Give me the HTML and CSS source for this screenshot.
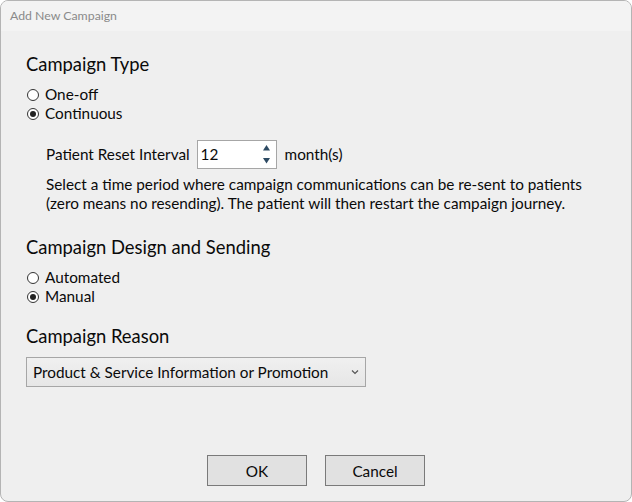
FILE: index.html
```html
<!DOCTYPE html>
<html>
<head>
<meta charset="utf-8">
<link rel="stylesheet" href="styles.css">
</head>
<body>
<div class="window">
  <div class="titlebar">Add New Campaign</div>
  <div class="content">
    <h2 class="heading first">Campaign Type</h2>
    <div class="radios">
      <label class="radio"><span class="dot"></span>One-off</label>
      <label class="radio"><span class="dot on"></span>Continuous</label>
    </div>
    <div class="sub">
      <div class="interval">
        <span>Patient Reset Interval</span>
        <div class="spin">
          <span class="spin-val">12</span>
          <span class="arrows">
            <svg width="9" height="22" viewBox="0 0 9 22"><path d="M4.5 2 L8 7.5 L1 7.5 Z" fill="#2d4a63"/><path d="M1 15 L8 15 L4.5 20.5 Z" fill="#2d4a63"/></svg>
          </span>
        </div>
        <span>month(s)</span>
      </div>
      <p class="desc">Select a time period where campaign communications can be re-sent to patients (zero means no resending). The patient will then restart the campaign journey.</p>
    </div>
    <h2 class="heading">Campaign Design and Sending</h2>
    <div class="radios">
      <label class="radio"><span class="dot"></span>Automated</label>
      <label class="radio"><span class="dot on"></span>Manual</label>
    </div>
    <h2 class="heading">Campaign Reason</h2>
    <div class="select">
      <span>Product &amp; Service Information or Promotion</span>
      <svg width="8" height="6" viewBox="0 0 8 6"><path d="M1 1.5 L4 4.5 L7 1.5" fill="none" stroke="#555" stroke-width="1.2"/></svg>
    </div>
    <div class="buttons">
      <button class="btn">OK</button>
      <button class="btn">Cancel</button>
    </div>
  </div>
</div>
</body>
</html>
```
FILE: styles.css
```css
html, body {
  margin: 0;
  padding: 0;
  background: #ffffff;
}
body {
  font-family: Lato, "Noto Sans", sans-serif;
  color: #0a0a0a;
}
.window {
  width: 632px;
  height: 502px;
  box-sizing: border-box;
  border: 1px solid #b4b4b4;
  border-radius: 8px;
  background: #efefef;
  overflow: hidden;
  display: flex;
  flex-direction: column;
}
.titlebar {
  height: 30px;
  background: #f3f3f3;
  color: #8a8a8a;
  font-size: 12.3px;
  line-height: 30px;
  padding-left: 9px;
  flex: none;
}
.content {
  flex: 1;
  padding: 19px 25px 0 25px;
  display: flex;
  flex-direction: column;
  font-size: 15.3px;
}
.heading {
  font-weight: normal;
  font-size: 18.4px;
  margin: 0;
  line-height: 28px;
  color: #0a0a0a;
}
.radios {
  display: flex;
  flex-direction: column;
  margin-top: 7px;
}
.radio {
  display: flex;
  align-items: center;
  height: 19px;
  line-height: 19px;
}
.dot {
  width: 10px;
  height: 10px;
  border: 1px solid #333;
  border-radius: 50%;
  background: #fff;
  margin: 0 6px 0 1px;
  position: relative;
  box-sizing: content-box;
}
.dot.on::after {
  content: "";
  position: absolute;
  left: 2px;
  top: 2px;
  width: 6px;
  height: 6px;
  border-radius: 50%;
  background: #222;
}
.sub {
  padding-left: 20px;
  margin-top: 16px;
}
.interval {
  display: flex;
  align-items: center;
  gap: 7px;
  height: 30px;
}
.spin {
  width: 80px;
  height: 29px;
  box-sizing: border-box;
  border: 1px solid #a6a6a6;
  background: #fff;
  display: flex;
  align-items: center;
  justify-content: space-between;
  padding: 0 5px 0 3px;
  margin-right: 1px;
}
.arrows {
  display: flex;
  align-items: center;
}
.desc {
  margin: 6px 0 0 0;
  line-height: 19px;
  width: 570px;
}
.sub + .heading {
  margin-top: 20px;
}
.radios + .heading {
  margin-top: 16px;
}
.select {
  margin-top: 7px;
  width: 340px;
  height: 30px;
  box-sizing: border-box;
  border: 1px solid #a6a6a6;
  background: linear-gradient(#f0f0f0, #e6e6e6);
  display: flex;
  align-items: center;
  justify-content: space-between;
  padding: 0 6px 0 6px;
}
.buttons {
  margin-top: auto;
  margin-bottom: 15px;
  display: flex;
  justify-content: center;
  gap: 18px;
}
.btn {
  width: 100px;
  height: 31px;
  border: 1px solid #7a7a7a;
  background: #e1e1e1;
  font-family: inherit;
  font-size: 15.3px;
  color: #0a0a0a;
  padding: 0;
}
```
